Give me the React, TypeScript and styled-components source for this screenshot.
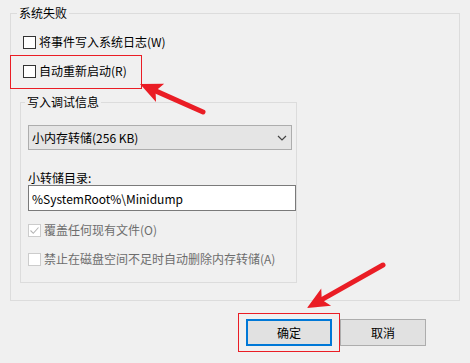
import styled, { createGlobalStyle } from "styled-components";

const GlobalStyle = createGlobalStyle`
	html, body {
		margin: 0;
		padding: 0;
		background: #f0f0f0;
	}
	body {
		font-family: "Noto Sans CJK SC", "Liberation Sans", sans-serif;
		font-size: 12px;
		color: #000;
	}
`;

const Page = styled.div`
	position: relative;
	width: 470px;
	height: 363px;
	box-sizing: border-box;
	padding: 5px 10px 0;
	overflow: hidden;
`;

const Group = styled.fieldset<{ $inner?: boolean }>`
	margin: ${({ $inner }) => ($inner ? "15px 15px 0 0" : "0")};
	min-width: 0;
	border: 1px solid #dcdcdc;
	padding: ${({ $inner }) => ($inner ? "0 0 15px 7px" : "0 0 17px 9px")};
	display: flex;
	flex-direction: column;
	align-items: flex-start;
`;

const Legend = styled.legend`
	margin-left: -3px;
	padding: 0 2px;
	line-height: 16px;
	height: 16px;
`;

const CheckRow = styled.label<{ $indent?: boolean; $disabled?: boolean; $gap: number }>`
	display: flex;
	align-items: center;
	height: 16px;
	margin-top: ${({ $gap }) => $gap}px;
	padding-left: ${({ $indent }) => ($indent ? 3 : 0)}px;
	column-gap: 3px;
	line-height: 16px;
	white-space: nowrap;
	color: ${({ $disabled }) => ($disabled ? "#6d6d6d" : "#000")};
`;

const Box = styled.span<{ $disabled?: boolean }>`
	display: flex;
	align-items: center;
	justify-content: center;
	width: 13px;
	height: 13px;
	box-sizing: border-box;
	border: 1px solid ${({ $disabled }) => ($disabled ? "#cccccc" : "#333333")};
	background: #fff;
`;

const Select = styled.div`
	margin-top: 15px;
	width: 264px;
	height: 25px;
	box-sizing: border-box;
	border: 1px solid #adadad;
	background: #e5e5e5;
	display: flex;
	align-items: center;
	justify-content: space-between;
	padding: 0 4px 0 3px;
	line-height: 16px;
`;

const FieldLabel = styled.div`
	margin-top: 20px;
	height: 15px;
	line-height: 15px;
`;

const TextBox = styled.div`
	width: 268px;
	height: 26px;
	box-sizing: border-box;
	border: 1px solid #7a7a7a;
	background: #fff;
	display: flex;
	align-items: center;
	padding-left: 3px;
`;

const Buttons = styled.div`
	display: flex;
	justify-content: flex-end;
	column-gap: 8px;
	margin: 18px 34px 0 0;
`;

const Button = styled.div<{ $default?: boolean }>`
	width: 86px;
	height: 27px;
	box-sizing: border-box;
	border: ${({ $default }) => ($default ? "2px solid #0078d7" : "1px solid #adadad")};
	background: #e1e1e1;
	display: flex;
	align-items: center;
	justify-content: center;
`;

const Overlay = styled.svg`
	position: absolute;
	left: 0;
	top: 0;
	pointer-events: none;
`;

const RED = "#ea1d25";

function Check({ checked, disabled }: { checked?: boolean; disabled?: boolean }) {
	return (
		<Box $disabled={disabled}>
			{checked && (
				<svg width="11" height="11" viewBox="0 0 11 11">
					<path d="M1.5 5.5 L4.3 8.3 L9.5 2.5" fill="none" stroke="#b4b4b4" strokeWidth="1.1" />
				</svg>
			)}
		</Box>
	);
}

function Arrow({ tip, tail }: { tip: [number, number]; tail: [number, number] }) {
	const dx = tail[0] - tip[0];
	const dy = tail[1] - tip[1];
	const len = Math.hypot(dx, dy);
	const ux = dx / len;
	const uy = dy / len;
	const nx = -uy;
	const ny = ux;
	const head = 22;
	const half = 10;
	const bx = tip[0] + ux * head;
	const by = tip[1] + uy * head;
	const neckX = tip[0] + ux * (head - 5);
	const neckY = tip[1] + uy * (head - 5);
	const pts = [
		tip,
		[bx + nx * half, by + ny * half],
		[neckX, neckY],
		[bx - nx * half, by - ny * half],
	]
		.map((p) => p.join(","))
		.join(" ");
	return (
		<g>
			<line x1={neckX} y1={neckY} x2={tail[0]} y2={tail[1]} stroke={RED} strokeWidth="5" strokeLinecap="round" />
			<polygon points={pts} fill={RED} />
		</g>
	);
}

export default function App() {
	return (
		<>
			<GlobalStyle />
			<Page>
				<Group>
					<Legend>系统失败</Legend>
					<CheckRow $indent $gap={13}>
						<Check />
						将事件写入系统日志(W)
					</CheckRow>
					<CheckRow $indent $gap={13}>
						<Check />
						自动重新启动(R)
					</CheckRow>
					<Group $inner>
						<Legend>写入调试信息</Legend>
						<Select>
							<span>小内存转储(256 KB)</span>
							<svg width="10" height="6" viewBox="0 0 10 6">
								<path d="M1 1 L5 5 L9 1" fill="none" stroke="#444" strokeWidth="1.2" />
							</svg>
						</Select>
						<FieldLabel>小转储目录:</FieldLabel>
						<TextBox>%SystemRoot%\Minidump</TextBox>
						<CheckRow $disabled $gap={11}>
							<Check checked disabled />
							覆盖任何现有文件(O)
						</CheckRow>
						<CheckRow $disabled $gap={13}>
							<Check disabled />
							禁止在磁盘空间不足时自动删除内存转储(A)
						</CheckRow>
					</Group>
				</Group>
				<Buttons>
					<Button $default>确定</Button>
					<Button>取消</Button>
				</Buttons>
				<Overlay width="470" height="363" viewBox="0 0 470 363">
					<rect x="10.5" y="55.5" width="131" height="33" fill="none" stroke={RED} strokeWidth="1" />
					<rect x="238.5" y="313.5" width="101" height="38" fill="none" stroke={RED} strokeWidth="1" />
					<Arrow tip={[140, 84]} tail={[203, 112]} />
					<Arrow tip={[307, 308]} tail={[383, 265]} />
				</Overlay>
			</Page>
		</>
	);
}
